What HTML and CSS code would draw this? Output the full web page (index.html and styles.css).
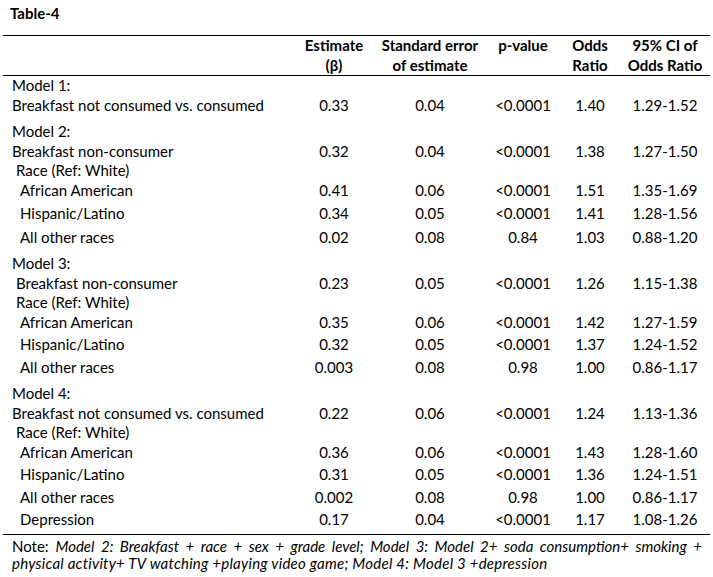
FILE: index.html
```html
<!DOCTYPE html>
<html>
<head>
<meta charset="utf-8">
<link rel="stylesheet" href="styles.css">
</head>
<body>
<div class="title">Table-4</div>
<table class="tbl">
  <colgroup>
    <col class="c1"><col class="c2"><col class="c3"><col class="c4"><col class="c5"><col class="c6">
  </colgroup>
  <thead>
    <tr>
      <th></th>
      <th>Estimate<br>(β)</th>
      <th>Standard error<br>of estimate</th>
      <th>p-value</th>
      <th>Odds<br>Ratio</th>
      <th class="ci">95% CI of<br>Odds Ratio</th>
    </tr>
  </thead>
  <tbody>
    <tr><td class="lbl">Model 1:</td><td></td><td></td><td></td><td></td><td></td></tr>
    <tr><td class="lbl">Breakfast not consumed vs. consumed</td><td>0.33</td><td>0.04</td><td>&lt;0.0001</td><td>1.40</td><td class="ci">1.29-1.52</td></tr>

    <tr class="gp"><td class="lbl">Model 2:</td><td></td><td></td><td></td><td></td><td></td></tr>
    <tr><td class="lbl">Breakfast non-consumer</td><td>0.32</td><td>0.04</td><td>&lt;0.0001</td><td>1.38</td><td class="ci">1.27-1.50</td></tr>
    <tr><td class="lbl in1">Race (Ref: White)</td><td></td><td></td><td></td><td></td><td></td></tr>
    <tr><td class="lbl in2">African American</td><td>0.41</td><td>0.06</td><td>&lt;0.0001</td><td>1.51</td><td class="ci">1.35-1.69</td></tr>
    <tr class="sp4"><td class="lbl in2">Hispanic/Latino</td><td>0.34</td><td>0.05</td><td>&lt;0.0001</td><td>1.41</td><td class="ci">1.28-1.56</td></tr>
    <tr class="sp4"><td class="lbl in2">All other races</td><td>0.02</td><td>0.08</td><td>0.84</td><td>1.03</td><td class="ci">0.88-1.20</td></tr>

    <tr class="gp"><td class="lbl">Model 3:</td><td></td><td></td><td></td><td></td><td></td></tr>
    <tr><td class="lbl in1">Breakfast non-consumer</td><td>0.23</td><td>0.05</td><td>&lt;0.0001</td><td>1.26</td><td class="ci">1.15-1.38</td></tr>
    <tr><td class="lbl in1">Race (Ref: White)</td><td></td><td></td><td></td><td></td><td></td></tr>
    <tr><td class="lbl in2">African American</td><td>0.35</td><td>0.06</td><td>&lt;0.0001</td><td>1.42</td><td class="ci">1.27-1.59</td></tr>
    <tr class="sp3"><td class="lbl in2">Hispanic/Latino</td><td>0.32</td><td>0.05</td><td>&lt;0.0001</td><td>1.37</td><td class="ci">1.24-1.52</td></tr>
    <tr class="sp3"><td class="lbl in2">All other races</td><td>0.003</td><td>0.08</td><td>0.98</td><td>1.00</td><td class="ci">0.86-1.17</td></tr>

    <tr class="gp"><td class="lbl">Model 4:</td><td></td><td></td><td></td><td></td><td></td></tr>
    <tr><td class="lbl">Breakfast not consumed vs. consumed</td><td>0.22</td><td>0.06</td><td>&lt;0.0001</td><td>1.24</td><td class="ci">1.13-1.36</td></tr>
    <tr><td class="lbl in1">Race (Ref: White)</td><td></td><td></td><td></td><td></td><td></td></tr>
    <tr><td class="lbl in2">African American</td><td>0.36</td><td>0.06</td><td>&lt;0.0001</td><td>1.43</td><td class="ci">1.28-1.60</td></tr>
    <tr class="sp3"><td class="lbl in2">Hispanic/Latino</td><td>0.31</td><td>0.05</td><td>&lt;0.0001</td><td>1.36</td><td class="ci">1.24-1.51</td></tr>
    <tr class="sp3"><td class="lbl in2">All other races</td><td>0.002</td><td>0.08</td><td>0.98</td><td>1.00</td><td class="ci">0.86-1.17</td></tr>
    <tr class="sp3 last"><td class="lbl in2">Depression</td><td>0.17</td><td>0.04</td><td>&lt;0.0001</td><td>1.17</td><td class="ci">1.08-1.26</td></tr>
  </tbody>
</table>
<div class="note">
  <div class="note-l1">Note: <em>Model 2: Breakfast + race + sex + grade level; Model 3: Model 2+ soda consumption+ smoking +</em></div>
  <div class="note-l2"><em>physical activity+ TV watching +playing video game; Model 4: Model 3 +depression</em></div>
</div>
</body>
</html>
```

FILE: styles.css
```css
html, body {
  margin: 0;
  padding: 0;
  background: #ffffff;
}

body {
  font-family: Lato, "Liberation Sans", sans-serif;
  font-size: 15px;
  color: #000000;
  width: 713px;
}

.title {
  font-weight: bold;
  line-height: 20px;
  height: 35px;
  box-sizing: border-box;
  padding: 3px 0 0 10px;
}

.tbl {
  border-collapse: separate;
  border-spacing: 0;
  table-layout: fixed;
  width: 707px;
  margin-left: 3px;
}

.c1 { width: 295px; }
.c2 { width: 72px; }
.c3 { width: 120px; }
.c4 { width: 66px; }
.c5 { width: 68px; }
.c6 { width: 86px; }

.tbl th {
  font-weight: bold;
  text-align: center;
  vertical-align: top;
  line-height: 19.5px;
  height: 39px;
  padding: 0;
  border-top: 1px solid #000;
  border-bottom: 1px solid #000;
  white-space: nowrap;
}

.tbl td {
  padding: 0;
  line-height: 19.5px;
  height: 19.5px;
  vertical-align: bottom;
  text-align: center;
  white-space: nowrap;
}

.tbl .ci {
  padding-right: 4px;
}

.tbl td.lbl {
  text-align: left;
  padding-left: 9px;
}

.tbl td.in1 { padding-left: 13px; }
.tbl td.in2 { padding-left: 17px; }

.tbl tr.gp td { padding-top: 7px; }
.tbl tr.sp4 td { padding-top: 4px; }
.tbl tr.sp3 td { padding-top: 3px; }

.tbl tr.last td {
  padding-bottom: 4px;
  border-bottom: 1px solid #000;
}

.note {
  padding: 3px 0 0 12px;
  width: 690px;
  line-height: 17px;
}

.note-l1 {
  text-align: justify;
  text-align-last: justify;
}

.note-l2 {
  text-align: left;
  letter-spacing: 0.25px;
}
```
